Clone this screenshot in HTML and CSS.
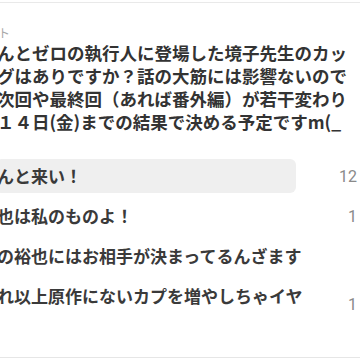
FILE: index.html
```html
<!DOCTYPE html>
<html lang="ja">
<head>
    <meta charset="UTF-8">
    <meta name="viewport" content="width=device-width, initial-scale=1.0">
    <title>アンケート</title>
    <link rel="stylesheet" href="styles.css">
</head>
<body>
    <div class="poll">
        <div class="poll-label">ト</div>
        <div class="question">
            <div class="question-line">んとゼロの執行人に登場した境子先生のカッ</div>
            <div class="question-line">グはありですか？話の大筋には影響ないので</div>
            <div class="question-line">次回や最終回（あれば番外編）が若干変わり</div>
            <div class="question-line">１４日(金)までの結果で決める予定ですm(_</div>
        </div>

        <ul class="options">
            <li class="option">
                <span class="option-text selected">んと来い！</span>
                <span class="option-count">12</span>
            </li>
            <li class="option">
                <span class="option-text">也は私のものよ！</span>
                <span class="option-count">1</span>
            </li>
            <li class="option">
                <span class="option-text">の裕也にはお相手が決まってるんざます</span>
            </li>
            <li class="option">
                <span class="option-text">れ以上原作にないカプを増やしちゃイヤ</span>
                <span class="option-count low">1</span>
            </li>
        </ul>
    </div>
</body>
</html>
```

FILE: styles.css
```css
html, body {
    margin: 0;
    padding: 0;
    background-color: #fff;
    overflow: hidden;
}
body {
    font-family: "Noto Sans CJK JP", "Noto Sans", sans-serif;
    color: #333;
    width: 360px;
    height: 360px;
}
.poll {
    margin-top: 2px;
    border-top: 1px solid #e9e9e9;
    border-bottom: 1px solid #e6e6e6;
    padding-top: 22px;
    padding-bottom: 44px;
}
.poll-label {
    font-size: 12px;
    line-height: 16px;
    color: #a8a8a8;
    margin-left: -2px;
}
.question {
    margin-top: 0;
    font-size: 17.5px;
    line-height: 23px;
    font-weight: 700;
    color: #333;
    white-space: nowrap;
}
.question-line {
    margin-left: -3px;
}
.options {
    list-style: none;
    margin: 26px 0 0 0;
    padding: 0;
    display: flex;
    flex-direction: column;
    gap: 6px;
}
.option {
    display: flex;
    align-items: center;
    height: 34px;
}
.option-text {
    flex: 0 0 auto;
    width: 300px;
    height: 34px;
    margin-left: -4px;
    padding-left: 1px;
    box-sizing: border-box;
    line-height: 34px;
    font-size: 17px;
    font-weight: 700;
    color: #3a3a3a;
    white-space: nowrap;
    border-radius: 6px;
}
.option-text.selected {
    background-color: #efefef;
}
.option-count {
    margin-left: auto;
    padding-right: 3px;
    font-family: Roboto, "Noto Sans", sans-serif;
    font-size: 16px;
    color: #8a8a8a;
}
.option-count.low {
    align-self: flex-end;
    line-height: 16px;
}
```
